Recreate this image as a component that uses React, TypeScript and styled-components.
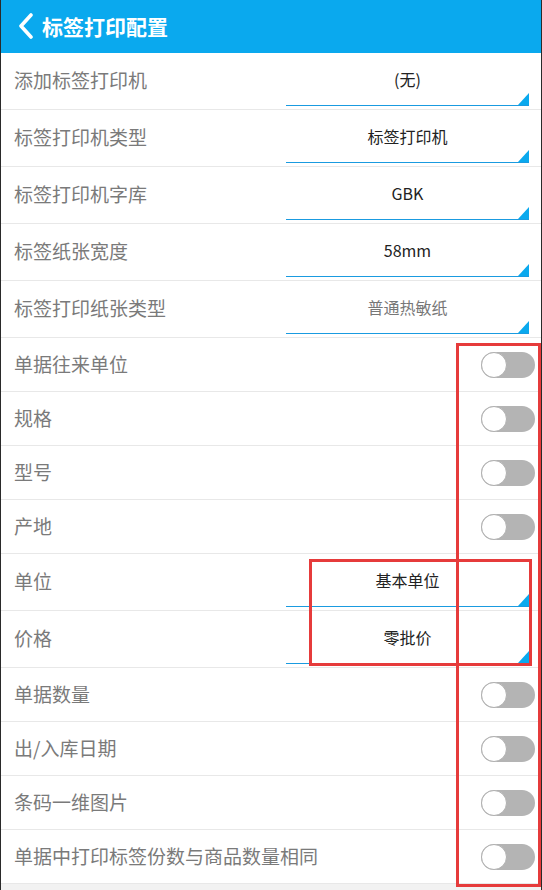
import styled, { createGlobalStyle } from "styled-components";

const GlobalStyle = createGlobalStyle`
  html, body {
    margin: 0;
    padding: 0;
    background: #f2f2f2;
  }
  * {
    box-sizing: border-box;
  }
`;

type Item =
  | { kind: "select"; label: string; value: string; muted?: boolean }
  | { kind: "toggle"; label: string; on?: boolean };

const PRINTER_ITEMS: Item[] = [
  { kind: "select", label: "添加标签打印机", value: "(无)" },
  { kind: "select", label: "标签打印机类型", value: "标签打印机" },
  { kind: "select", label: "标签打印机字库", value: "GBK" },
  { kind: "select", label: "标签纸张宽度", value: "58mm" },
  { kind: "select", label: "标签打印纸张类型", value: "普通热敏纸", muted: true },
  { kind: "toggle", label: "单据往来单位" },
  { kind: "toggle", label: "规格" },
  { kind: "toggle", label: "型号" },
  { kind: "toggle", label: "产地" },
  { kind: "select", label: "单位", value: "基本单位" },
  { kind: "select", label: "价格", value: "零批价" },
  { kind: "toggle", label: "单据数量" },
  { kind: "toggle", label: "出/入库日期" },
  { kind: "toggle", label: "条码一维图片" },
  { kind: "toggle", label: "单据中打印标签份数与商品数量相同" },
];

export default function App() {
  return (
    <>
      <GlobalStyle />
      <Page>
        <Header>
          <BackButton aria-label="返回">
            <svg width="16" height="26" viewBox="0 0 16 26">
              <path
                d="M13 2 L3 13 L13 24"
                fill="none"
                stroke="#fff"
                strokeWidth="3.6"
                strokeLinecap="round"
                strokeLinejoin="round"
              />
            </svg>
          </BackButton>
          <Title>标签打印配置</Title>
        </Header>

        <List>
          {PRINTER_ITEMS.map((item) =>
            item.kind === "select" ? (
              <SelectRow key={item.label}>
                <Label>{item.label}</Label>
                <Select>
                  <SelectValue $muted={item.muted}>{item.value}</SelectValue>
                  <Corner />
                </Select>
              </SelectRow>
            ) : (
              <ToggleRow key={item.label}>
                <Label>{item.label}</Label>
                <Switch $on={item.on}>
                  <Knob $on={item.on} />
                </Switch>
              </ToggleRow>
            ),
          )}
        </List>

        <Footer />

        {/* 截图上的红色标注框 */}
        <Mark style={{ left: 455, top: 343, width: 85, height: 544 }} />
        <Mark style={{ left: 308, top: 559, width: 223, height: 107 }} />
      </Page>
    </>
  );
}

const Page = styled.div`
  position: relative;
  width: 542px;
  min-height: 890px;
  display: flex;
  flex-direction: column;
  background: #f2f2f2;
  border-left: 1px solid #2a2a2a;
  border-right: 1px solid #2a2a2a;
  font-family: "Noto Sans CJK SC", "Noto Sans", sans-serif;
`;

const Header = styled.div`
  height: 53px;
  display: flex;
  align-items: center;
  gap: 8px;
  padding-left: 17px;
  padding-bottom: 2px;
  background-color: #0aa9ee;
`;

const BackButton = styled.button`
  display: flex;
  align-items: center;
  padding: 0;
  border: 0;
  background: none;
  cursor: pointer;
`;

const Title = styled.h1`
  margin: 0;
  font-size: 21px;
  font-weight: 700;
  color: #fff;
`;

const List = styled.div`
  display: flex;
  flex-direction: column;
  background-color: #fff;
`;

const RowBase = styled.div`
  display: flex;
  align-items: center;
  justify-content: space-between;
  padding-left: 13px;
  border-bottom: 1px solid #e8e8e8;
`;

const SelectRow = styled(RowBase)`
  height: 57px;
  padding-right: 12px;
`;

const ToggleRow = styled(RowBase)`
  height: 54px;
  padding-right: 6px;
`;

const Label = styled.span`
  font-size: 19px;
  line-height: 1;
  color: #7a7a7a;
  padding-bottom: 3px;
`;

const Select = styled.div`
  position: relative;
  align-self: stretch;
  width: 243px;
  display: flex;
  align-items: center;
  justify-content: center;
  margin-bottom: 3px;
  border-bottom: 1.5px solid #1a9be0;
`;

const SelectValue = styled.span<{ $muted?: boolean }>`
  font-size: 16px;
  color: ${({ $muted }) => ($muted ? "#777" : "#222")};
`;

const Corner = styled.span`
  position: absolute;
  right: 0;
  bottom: 0;
  width: 0;
  height: 0;
  border-left: 11px solid transparent;
  border-bottom: 12px solid #0aa9ee;
`;

const Switch = styled.div<{ $on?: boolean }>`
  position: relative;
  width: 54px;
  height: 26px;
  border-radius: 13px;
  background-color: ${({ $on }) => ($on ? "#0aa9ee" : "#b4b4b4")};
`;

const Knob = styled.span<{ $on?: boolean }>`
  position: absolute;
  top: 0;
  left: ${({ $on }) => ($on ? "28px" : "0")};
  width: 26px;
  height: 26px;
  border-radius: 50%;
  background-color: #fff;
  border: 1.5px solid #b0b0b0;
`;

const Footer = styled.div`
  flex: 1;
  background-color: #f2f2f2;
`;

const Mark = styled.div`
  position: absolute;
  border: 3px solid #e63b3b;
  pointer-events: none;
`;
